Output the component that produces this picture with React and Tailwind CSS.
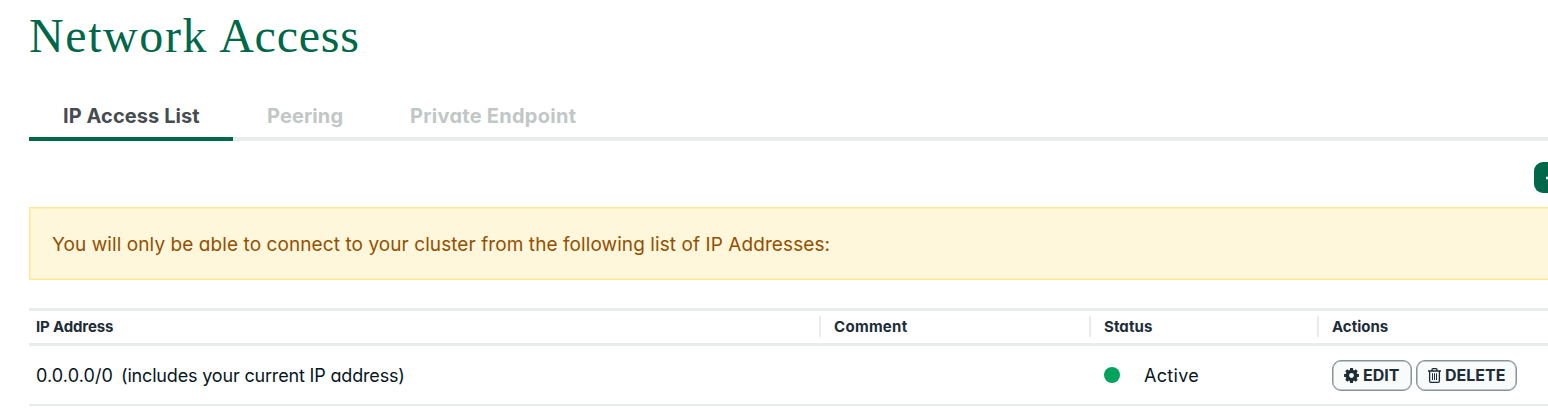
const sans = "font-['Inter','Liberation_Sans',sans-serif] [font-feature-settings:'cv11']";

function GearIcon() {
  return (
    <svg className="h-[15px] w-[15px] shrink-0" viewBox="-8 -8 16 16" fill="currentColor">
      <path fillRule="evenodd" d="M0-6.200a6.200 6.200 0 1 0 0 12.400 6.200 6.200 0 0 0 0-12.400zM0-2.600a2.600 2.600 0 1 1 0 5.200 2.600 2.600 0 0 1 0-5.200z" />
      {[0, 45, 90, 135, 180, 225, 270, 315].map((angle) => (
        <path key={angle} transform={`rotate(${angle})`} d="M-1.900-5l.4-2.900h3L1.900-5z" />
      ))}
    </svg>
  );
}

function TrashIcon() {
  return (
    <svg className="h-[15px] w-[13px] shrink-0" viewBox="0 0 13 15" fill="none" stroke="currentColor" strokeWidth="1.3">
      <path d="M0 3h13M4 2.800V1.700Q4 .7 5 .7h3q1 0 1 1v1.100M1.600 3v10q0 1.300 1.400 1.300h7q1.400 0 1.400-1.300V3" />
      <path d="M4.500 5.300v6.700M6.500 5.300v6.700M8.500 5.300v6.700" strokeWidth="1" />
    </svg>
  );
}

function Tab({ children, className }) {
  return (
    <button className={`-mb-1 h-[45px] border-b-4 pb-[1px] text-left text-[20px] leading-[40px] font-bold whitespace-nowrap ${className}`}>
      {children}
    </button>
  );
}

function ActionButton({ icon, children, className }) {
  return (
    <button
      className={`flex h-[31px] items-center rounded-[9px] border border-[#889397] bg-[#f9fbfa] text-[16px] leading-none font-bold whitespace-nowrap text-[#1c2d38] shadow-[inset_0_0_0_0.5px_#889397] ${className}`}
    >
      {icon}
      {children}
    </button>
  );
}

export default function App() {
  return (
    <main className={`h-[410px] w-[1548px] overflow-hidden bg-white pl-[29px] text-[#061621] ${sans}`}>
      <h1 className="flex h-24 gap-[12px] pt-[8px] font-['Liberation_Serif',serif] text-[48px] leading-[56px] text-[#00684a]">
        <span className="tracking-[1.6px]">Network</span>{' '}
        <span className="-ml-[1px] tracking-[0.75px]">Access</span>
      </h1>

      <nav className="flex h-[45px] border-b-4 border-[#e8edeb]">
        <Tab className="w-[204px] border-[#00684a] pl-[34px] tracking-[0.08px] text-[#464c4f]">IP Access List</Tab>
        <Tab className="w-[143px] border-transparent pl-[34px] tracking-[0.1px] text-[#c1c7c6]">Peering</Tab>
        <Tab className="border-transparent pl-[34px] tracking-[0.27px] text-[#c1c7c6]">Private Endpoint</Tab>
      </nav>

      <div className="flex h-[66px] pt-[21px] pl-[1505px]">
        <button className="flex h-[31px] w-[180px] shrink-0 items-center rounded-[9px] bg-[#00684a] pl-3 text-white">
          <svg className="h-3 w-3" viewBox="0 0 12 12" stroke="currentColor" strokeWidth="2.5">
            <path d="M0 6h12M6 0v12" />
          </svg>
        </button>
      </div>

      <div className="-mr-1 flex h-[73px] items-center border border-[#fee890] bg-[#fef7db] pt-[3px] pl-[22px] text-[19px] tracking-[0.08px] whitespace-nowrap text-[#944f01] shadow-[inset_0_0_0_1px_#fff0b3]">
        You will only be able to connect to your cluster from the following list of IP Addresses:
      </div>

      <section className="mt-7">
        <div className="grid h-[38px] grid-cols-[790px_270px_228px_231px] items-start border-y-3 border-[#e8edeb] pt-[5px] text-[15px] leading-[21px] font-bold text-[#1c2d38]">
          <div className="pl-[7px] tracking-[-0.15px]">IP Address</div>
          <div className="border-l-2 border-[#e8edeb] pl-[13px] tracking-[0.3px]">Comment</div>
          <div className="border-l-2 border-[#e8edeb] pl-[13px] tracking-[0.1px]">Status</div>
          <div className="border-l-2 border-[#e8edeb] pl-[13px]">Actions</div>
        </div>
        <div className="grid h-[60px] grid-cols-[790px_270px_228px_231px] items-center border-b-2 border-[#e8edeb] text-[18px]">
          <div className="flex gap-2 pl-[7px]">
            <span className="tracking-[0.1px]">0.0.0.0/0</span>
            <span className="tracking-[-0.17px]">(includes your current IP address)</span>
          </div>
          <div />
          <div className="flex items-center pl-[15px]">
            <span className="mr-[24px] h-4 w-4 rounded-full bg-[#00a35c]" />
            <span className="tracking-[0.3px]">Active</span>
          </div>
          <div className="flex gap-1 pl-[15px]">
            <ActionButton className="w-[80px] gap-1 pl-[11px]" icon={<GearIcon />}>EDIT</ActionButton>
            <ActionButton className="w-[101px] gap-1 pl-[11px]" icon={<TrashIcon />}>DELETE</ActionButton>
          </div>
        </div>
      </section>
    </main>
  );
}
